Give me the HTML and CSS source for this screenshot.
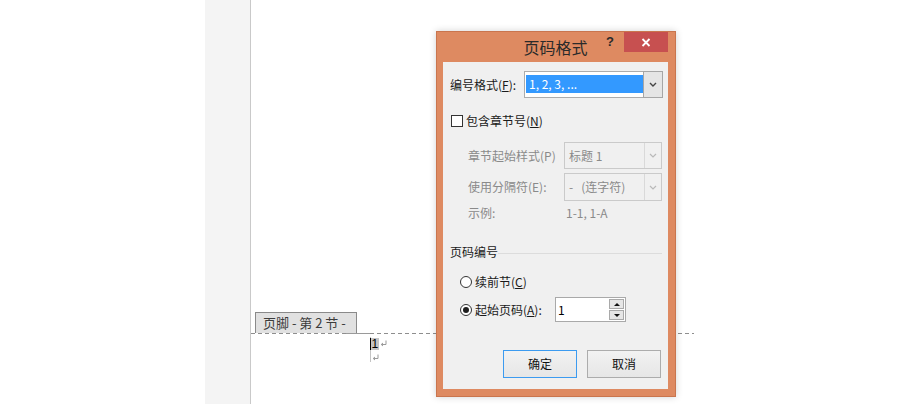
FILE: index.html
```html
<!DOCTYPE html>
<html lang="zh-CN">
<head>
<meta charset="utf-8">
<title>页码格式</title>
<link rel="stylesheet" href="styles.css">
</head>
<body>
<div class="screen">
  <div class="desk"></div>
  <div class="strip"></div>
  <div class="page">
    <div class="footer-tag">页脚 - 第 2 节 -</div>
    <div class="footer-rule"><span class="rule-solid"></span></div>
    <div class="text-lines">
      <div class="line"><span class="caret"></span><span class="sel">1</span><svg class="para" width="7" height="7" viewBox="0 0 7 7"><path d="M6 0.5V4.5H1.5M3 3L1.2 4.5L3 6" fill="none" stroke="#9a9a9a" stroke-width="1"/></svg></div>
      <div class="line line2"><svg class="para" width="7" height="7" viewBox="0 0 7 7"><path d="M6 0.5V4.5H1.5M3 3L1.2 4.5L3 6" fill="none" stroke="#9a9a9a" stroke-width="1"/></svg></div>
    </div>
  </div>

  <div class="dialog">
    <div class="titlebar">
      <span class="tb-left"></span>
      <span class="title">页码格式</span>
      <span class="tb-right">
        <span class="help">?</span>
        <span class="close"><svg width="10" height="9" viewBox="0 0 10 9"><path d="M1.5 1L8.5 8M8.5 1L1.5 8" stroke="#fff" stroke-width="1.8" fill="none"/></svg></span>
      </span>
    </div>
    <div class="body">
      <div class="row r-format">
        <span class="lbl lbl-format">编号格式(<u>F</u>):</span>
        <div class="combo combo-active">
          <span class="combo-val"><span class="hl">1, 2, 3, ...</span></span>
          <span class="combo-btn"><svg width="8" height="5" viewBox="0 0 8 5"><path d="M1 1L4 4L7 1" fill="none" stroke="#444" stroke-width="1.4"/></svg></span>
        </div>
      </div>
      <div class="row r-check">
        <span class="check"></span>
        <span class="lbl">包含章节号(<u>N</u>)</span>
      </div>
      <div class="row r-style">
        <span class="lbl dis lbl-sub">章节起始样式(P)</span>
        <div class="combo combo-dis">
          <span class="combo-val dis">标题 1</span>
          <span class="combo-btn"><svg width="8" height="5" viewBox="0 0 8 5"><path d="M1 1L4 4L7 1" fill="none" stroke="#b9b9b9" stroke-width="1.2"/></svg></span>
        </div>
      </div>
      <div class="row r-sep">
        <span class="lbl dis lbl-sub">使用分隔符(E):</span>
        <div class="combo combo-dis">
          <span class="combo-val dis">-&nbsp;&nbsp;&nbsp;(连字符)</span>
          <span class="combo-btn"><svg width="8" height="5" viewBox="0 0 8 5"><path d="M1 1L4 4L7 1" fill="none" stroke="#b9b9b9" stroke-width="1.2"/></svg></span>
        </div>
      </div>
      <div class="row r-example">
        <span class="lbl dis lbl-ex">示例:</span>
        <span class="lbl dis">1-1, 1-A</span>
      </div>
      <div class="row r-group">
        <span class="lbl">页码编号</span>
        <span class="group-line"></span>
      </div>
      <div class="row r-radio1">
        <span class="radio"></span>
        <span class="lbl">续前节(<u>C</u>)</span>
      </div>
      <div class="row r-radio2">
        <span class="radio radio-on"></span>
        <span class="lbl lbl-start">起始页码(<u>A</u>):</span>
        <div class="spin">
          <span class="spin-val">1</span>
          <span class="spin-btns">
            <span class="spin-btn"><span class="tri-up"></span></span>
            <span class="spin-btn"><span class="tri-down"></span></span>
          </span>
        </div>
      </div>
      <div class="row r-buttons">
        <span class="btn btn-default">确定</span>
        <span class="btn">取消</span>
      </div>
    </div>
  </div>
</div>
</body>
</html>
```

FILE: styles.css
```css
* { box-sizing: border-box; }
html, body { margin: 0; padding: 0; }
body {
  width: 900px;
  height: 404px;
  overflow: hidden;
  background: #fff;
  font-family: "Noto Sans CJK SC", "Noto Sans", sans-serif;
}
.screen {
  position: relative;
  display: flex;
  width: 900px;
  height: 404px;
}
.desk { width: 205px; background: #fff; }
.strip {
  width: 46px;
  background: #f4f4f4;
  border-right: 1px solid #c9c9c9;
}
.page {
  flex: 1;
  padding-top: 312px;
}
.footer-tag {
  margin-left: 4px;
  width: 102px;
  height: 21px;
  background: #e1e1e1;
  border: 1px solid #8a8a8a;
  border-bottom: none;
  padding-left: 7px;
  font-size: 13px;
  line-height: 19px;
  color: #3c3c3c;
  white-space: nowrap;
}
.footer-rule {
  display: flex;
  width: 443px;
  height: 1px;
  background: repeating-linear-gradient(to right, #8e8e8e 0 4px, transparent 4px 7px);
}
.rule-solid {
  margin-left: 95px;
  width: 24px;
  height: 1px;
  background: #9a9a9a;
}
.text-lines {
  margin-left: 119px;
  margin-top: 3px;
  width: 20px;
  border-left: 1px solid #c4c4c4;
}
.line {
  display: flex;
  align-items: center;
  height: 13px;
}
.line2 { margin-top: 3px; height: 9px; }
.caret {
  width: 1px;
  height: 12px;
  background: #000;
  margin-left: -1px;
}
.sel {
  background: #c4c4c4;
  font-family: "Liberation Sans", sans-serif;
  font-size: 12px;
  line-height: 12px;
  height: 12px;
  color: #000;
  padding: 0 0.5px;
}
.para { display: block; margin-left: 1px; }

/* dialog */
.dialog {
  position: absolute;
  left: 436px;
  top: 31px;
  width: 240px;
  height: 366px;
  background: #de8a61;
  border: 1px solid #c9754e;
  box-shadow: 0 0 7px rgba(0, 0, 0, 0.18);
  padding: 0 7px 7px 6px;
  display: flex;
  flex-direction: column;
}
.titlebar {
  height: 30px;
  display: grid;
  grid-template-columns: 1fr auto 1fr;
  align-items: start;
}
.title {
  font-size: 16px;
  line-height: 28px;
  color: #2a2a2a;
  padding-top: 1px;
}
.tb-right {
  display: flex;
  justify-content: flex-end;
  align-items: flex-start;
}
.help {
  font-family: "Liberation Sans", sans-serif;
  font-weight: bold;
  font-size: 13px;
  line-height: 20px;
  color: #2b2b2b;
  margin-right: 10px;
}
.close {
  width: 44px;
  height: 20px;
  background: #c75050;
  display: flex;
  align-items: center;
  justify-content: center;
}
.close svg { display: block; }

.body {
  flex: 1;
  background: #f0f0f0;
  display: flex;
  flex-direction: column;
}
.row {
  display: flex;
  align-items: center;
  flex-shrink: 0;
}
.lbl {
  font-size: 12px;
  line-height: 16px;
  color: #1a1a1a;
  white-space: nowrap;
}
.lbl u { text-underline-offset: 1px; }
.dis { color: #8a8a8a; }

.r-format { margin-top: 9px; height: 27px; padding-left: 7px; }
.lbl-format { width: 74px; }

.combo {
  display: flex;
  height: 100%;
  background: #fff;
}
.combo-active {
  width: 139px;
  border: 1px solid #acacac;
}
.combo-active .combo-val {
  flex: 1;
  padding: 3px 0 4px 1px;
  display: flex;
}
.hl {
  flex: 1;
  background: #3399ff;
  color: #fff;
  font-size: 12px;
  line-height: 18px;
  padding-left: 3px;
  white-space: nowrap;
}
.combo-btn {
  width: 19px;
  display: flex;
  align-items: center;
  justify-content: center;
}
.combo-active .combo-btn {
  background: #e5e5e5;
  border: 1px solid #a6a6a6;
  margin: -1px -1px -1px 0;
  width: 20px;
}
.combo-btn svg { display: block; }

.r-check { margin-top: 15px; height: 16px; padding-left: 8px; }
.check {
  width: 12px;
  height: 12px;
  border: 1px solid #333;
  background: #fff;
  margin-right: 3px;
}

.r-style { margin-top: 13px; height: 27px; padding-left: 25px; }
.r-sep { margin-top: 4px; height: 28px; padding-left: 25px; }
.lbl-sub { width: 96px; }
.combo-dis {
  width: 98px;
  border: 1px solid #cacaca;
  background: #f0f0f0;
}
.combo-dis .combo-val {
  flex: 1;
  font-size: 12px;
  line-height: 16px;
  padding-left: 4px;
  display: flex;
  align-items: center;
  white-space: nowrap;
}
.combo-dis .combo-btn {
  width: 17px;
  border-left: 1px solid #d9d9d9;
}

.r-example { margin-top: 4px; height: 16px; padding-left: 25px; }
.lbl-ex { width: 98px; }

.r-group { margin-top: 23px; height: 16px; padding-left: 7px; padding-right: 6px; }
.group-line {
  flex: 1;
  height: 1px;
  background: #dcdcdc;
  margin-top: 2px;
}

.r-radio1 { margin-top: 14px; height: 16px; padding-left: 17px; }
.r-radio2 { margin-top: 7px; height: 25px; padding-left: 17px; }
.radio {
  width: 12px;
  height: 12px;
  border: 1px solid #333;
  border-radius: 50%;
  background: #fff;
  margin-right: 3px;
  display: flex;
  align-items: center;
  justify-content: center;
}
.radio-on::after {
  content: "";
  width: 6px;
  height: 6px;
  border-radius: 50%;
  background: #1e1e1e;
}
.lbl-start { width: 80px; }

.spin {
  width: 71px;
  height: 25px;
  border: 1px solid #a9a9a9;
  background: #fff;
  display: flex;
}
.spin-val {
  flex: 1;
  font-size: 12px;
  line-height: 23px;
  padding-left: 2px;
  color: #000;
}
.spin-btns {
  width: 16px;
  display: flex;
  flex-direction: column;
  padding: 1px 1px 1px 0;
  gap: 1px;
}
.spin-btn {
  flex: 1;
  background: #e6e6e6;
  border: 1px solid #a9a9a9;
  display: flex;
  align-items: center;
  justify-content: center;
}
.tri-up {
  width: 0; height: 0;
  border-left: 3px solid transparent;
  border-right: 3px solid transparent;
  border-bottom: 3px solid #111;
}
.tri-down {
  width: 0; height: 0;
  border-left: 3px solid transparent;
  border-right: 3px solid transparent;
  border-top: 3px solid #111;
}

.r-buttons { margin-top: 28px; height: 28px; padding-left: 60px; gap: 10px; }
.btn {
  width: 74px;
  height: 28px;
  border: 1px solid #acacac;
  background: linear-gradient(#f2f2f2, #e6e6e6);
  font-size: 12px;
  line-height: 26px;
  text-align: center;
  color: #111;
}
.btn-default { border-color: #3c9bf0; }
```
